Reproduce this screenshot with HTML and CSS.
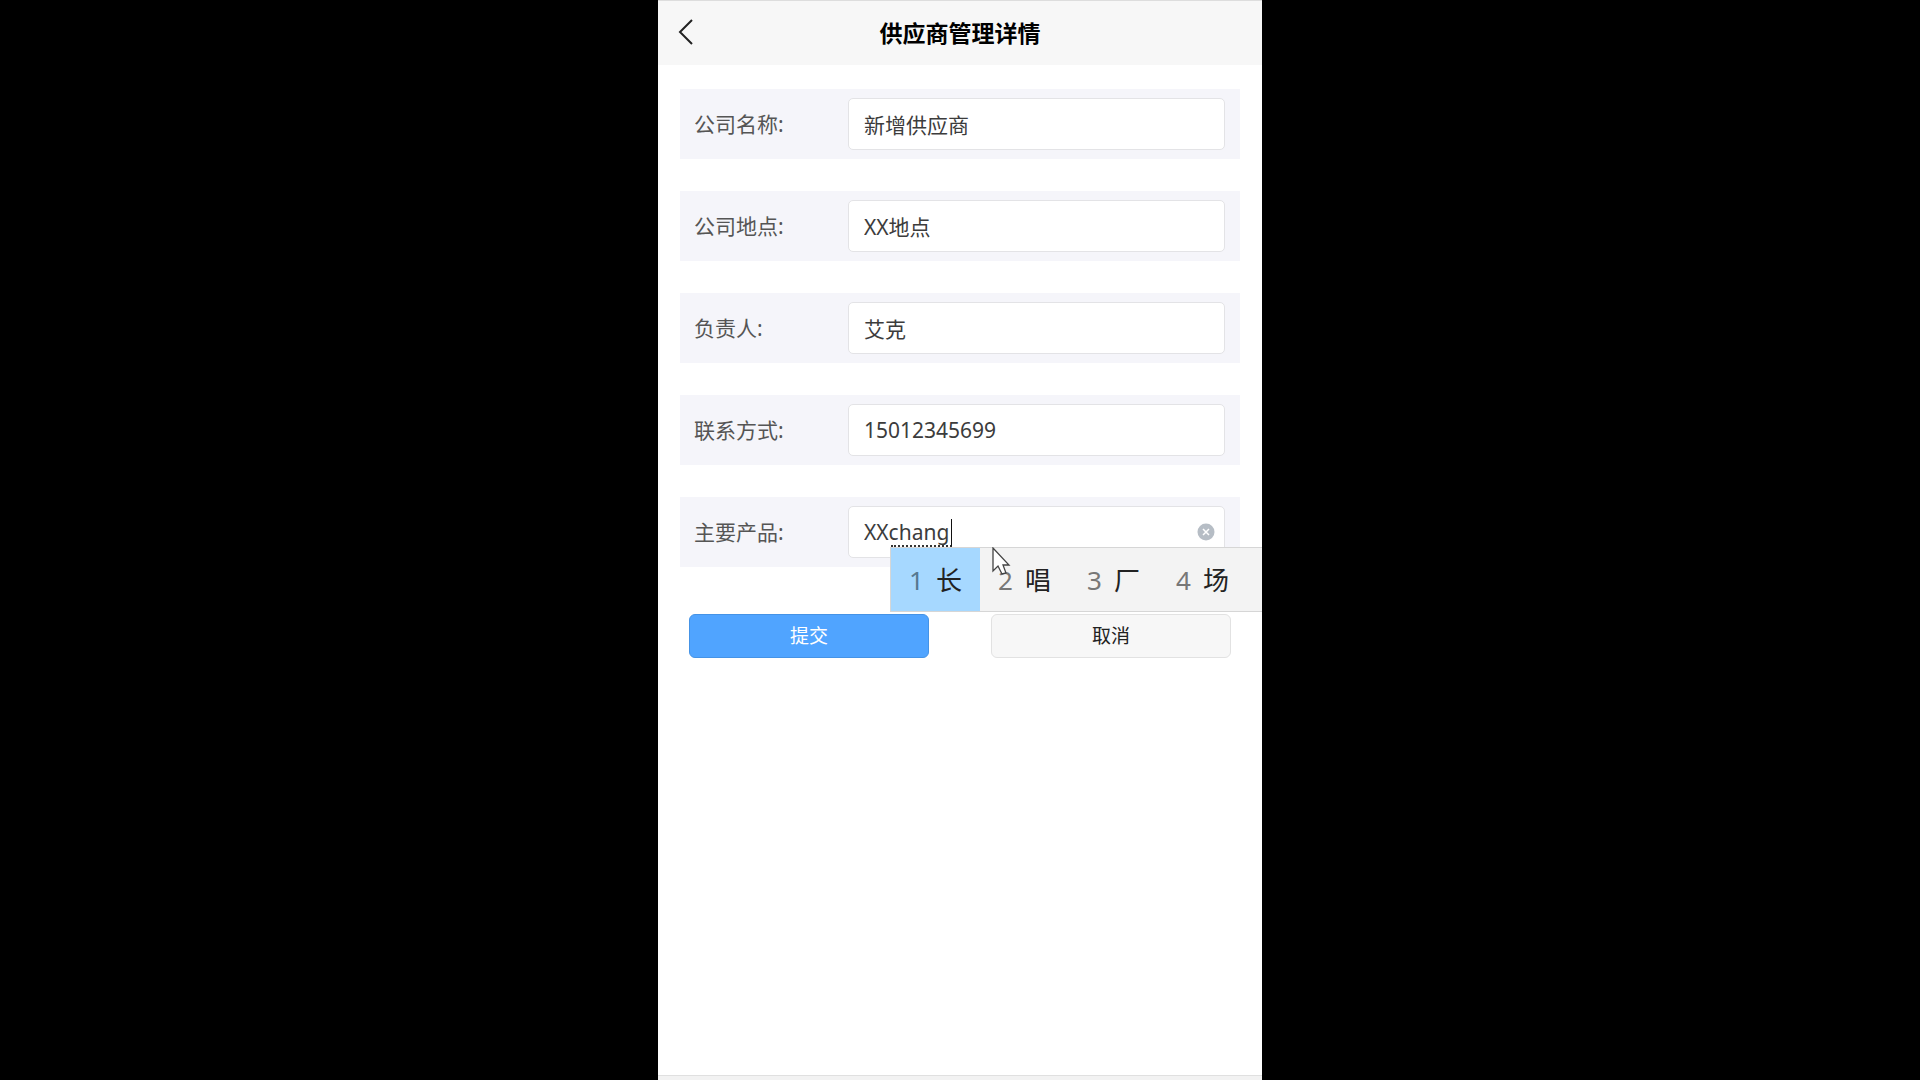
FILE: index.html
```html
<!DOCTYPE html>
<html lang="zh-CN">
<head>
<meta charset="utf-8">
<meta name="viewport" content="width=device-width, initial-scale=1">
<title>供应商管理详情</title>
<link rel="stylesheet" href="styles.css">
</head>
<body>
<div class="app">
  <header class="topbar">
    <button class="back" type="button" aria-label="返回">
      <svg width="16" height="26" viewBox="0 0 16 26" fill="none" stroke="#222" stroke-width="2"><path d="M14 1 2 13 14 25"/></svg>
    </button>
    <h1 class="title">供应商管理详情</h1>
  </header>
  <form class="form">
    <div class="row">
      <label class="label" for="company">公司名称:</label>
      <div class="field"><input class="input" id="company" type="text" value="新增供应商"></div>
    </div>
    <div class="row">
      <label class="label" for="place">公司地点:</label>
      <div class="field"><input class="input" id="place" type="text" value="XX地点"></div>
    </div>
    <div class="row">
      <label class="label" for="owner">负责人:</label>
      <div class="field"><input class="input" id="owner" type="text" value="艾克"></div>
    </div>
    <div class="row">
      <label class="label" for="contact">联系方式:</label>
      <div class="field"><input class="input" id="contact" type="text" value="15012345699"></div>
    </div>
    <div class="row">
      <label class="label" for="product">主要产品:</label>
      <div class="field">
        <input class="input" id="product" type="text" value="XXchang">
        <span class="composing"></span>
        <button class="clear" type="button" aria-label="清除">
          <svg width="18" height="18" viewBox="0 0 18 18"><circle cx="9" cy="9" r="8.5" fill="#b6bdc5"/><path d="M6 6l6 6M12 6l-6 6" stroke="#fff" stroke-width="1.5"/></svg>
        </button>
        <ol class="ime">
          <li class="candidate active"><span class="index">1</span>长</li>
          <li class="candidate"><span class="index">2</span>唱</li>
          <li class="candidate"><span class="index">3</span>厂</li>
          <li class="candidate"><span class="index">4</span>场</li>
        </ol>
        <svg class="pointer" width="19" height="29" viewBox="0 0 19 29"><path d="M1 1V24L6 19L10 27L14 26L11 18H17Z" fill="#fff" stroke="#444" stroke-width="1.3"/></svg>
      </div>
    </div>
    <div class="actions">
      <button class="button primary" type="submit">提交</button>
      <button class="button" type="button">取消</button>
    </div>
  </form>
  <footer class="bottom"></footer>
</div>
</body>
</html>
```
FILE: styles.css
```css
* {
  box-sizing: border-box;
}

body {
  margin: 0;
  background: #000;
  color: #444;
  font: 21px/28px "Noto Sans", "Noto Sans CJK SC", sans-serif;
}

button,
input {
  font: inherit;
}

.app {
  display: flex;
  flex-direction: column;
  max-width: 604px;
  min-height: 100vh;
  margin: 0 auto;
  background: #fff;
  overflow: hidden;
}

.topbar {
  display: grid;
  grid-template-columns: 56px 1fr 56px;
  align-items: center;
  height: 65px;
  border-top: 1px solid #ddd;
  background: #f7f7f7;
}

.back {
  display: flex;
  justify-content: center;
  padding: 0 0 2px;
  border: 0;
  background: none;
}

.title {
  margin: 0;
  color: #000;
  font-size: 23px;
  font-weight: 700;
  line-height: 32px;
  text-align: center;
}

.form {
  display: flex;
  flex: 1;
  flex-direction: column;
  gap: 32px;
  padding: 24px 22px;
}

.row {
  display: flex;
  align-items: center;
  padding: 9px 15px 9px 14px;
  background: #f5f5fa;
}

.label {
  flex: 0 0 154px;
  color: #555;
}

.field {
  position: relative;
  flex: 1;
}

.input {
  display: block;
  width: 100%;
  height: 52px;
  padding: 0 15px;
  border: 1px solid #e3e3e6;
  border-radius: 5px;
  outline: 0;
  background: #fff;
  color: #3c3c3c;
}

/* Underlined part of the text being typed, with the caret at its end */
.composing {
  position: absolute;
  top: 13px;
  left: 43px;
  width: 61px;
  height: 28px;
  border-right: 1px solid #111;
  border-bottom: 2px dotted #333;
}

.clear {
  position: absolute;
  top: 17px;
  right: 10px;
  padding: 0;
  border: 0;
  background: none;
}

.clear svg {
  display: block;
}

.ime {
  position: absolute;
  z-index: 1;
  top: 41px;
  left: 42px;
  display: flex;
  width: 480px;
  height: 65px;
  margin: 0;
  padding: 0;
  border: 1px solid #d6d6d6;
  background: #f3f3f3;
  color: #222;
  font-size: 26px;
  list-style: none;
}

.candidate {
  display: flex;
  align-items: center;
  gap: 12px;
  width: 89px;
  padding-left: 18px;
}

.active {
  background: #a6d8ff;
}

.index {
  color: #777;
}

.active .index {
  color: #567890;
}

.pointer {
  position: absolute;
  z-index: 2;
  top: 41px;
  left: 144px;
}

.actions {
  display: flex;
  justify-content: space-between;
  gap: 62px;
  padding: 15px 9px 0;
}

.button {
  flex: 1;
  height: 44px;
  padding: 0;
  border: 1px solid #e2e2e2;
  border-radius: 6px;
  background: #f7f7f7;
  color: #222;
  font-size: 19px;
}

.primary {
  border-color: #4593e6;
  background: #50a4ff;
  color: #fff;
}

.bottom {
  height: 5px;
  border-top: 1px solid #e0e0e0;
  background: #f2f2f2;
}
```
